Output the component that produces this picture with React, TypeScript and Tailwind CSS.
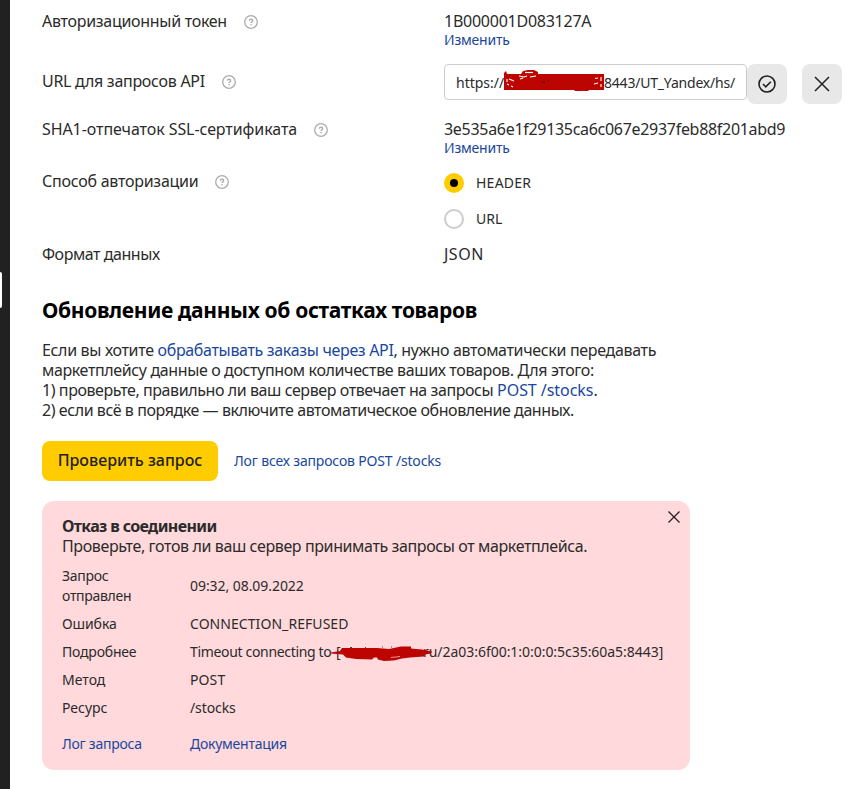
import React from 'react';

interface SettingRowProps {
  label: string;
  labelClass: string;
  className: string;
  hint?: boolean;
  children: React.ReactNode;
}

const DETAILS = [
  { label: 'Ошибка', value: 'CONNECTION_REFUSED', labelClass: 'tracking-[-0.08px]', valueClass: 'tracking-[0.06px]' },
  { label: 'Подробнее', value: '', labelClass: 'tracking-[-0.2px]', valueClass: '' },
  { label: 'Метод', value: 'POST', labelClass: '', valueClass: 'tracking-[0.1px]' },
  { label: 'Ресурс', value: '/stocks', labelClass: '', valueClass: 'tracking-[-0.1px]' }
];

const HintIcon = () => (
  <svg className="mt-0.5" width="14" height="14" viewBox="0 0 14 14" fill="none" stroke="#acacac">
    <circle cx="7" cy="7" r="6.3" strokeWidth="1.3" />
    <path d="M5.3 5.8c.1-2.1 3.4-2 3.4 0 0 1.1-1.7 1.1-1.7 2.2" strokeWidth="1.3" />
    <path d="M7 8.9v1.4" strokeWidth="1.4" />
  </svg>
);

const SettingRow: React.FC<SettingRowProps> = ({ label, labelClass, className, hint, children }) => (
  <div className={`flex items-start ${className}`}>
    <div className="flex h-5 w-[402px] shrink-0 items-center gap-[17px] leading-5">
      <span className={`whitespace-nowrap ${labelClass}`}>{label}</span>
      {hint && <HintIcon />}
    </div>
    {children}
  </div>
);

const UrlScribble = () => (
  <svg className="absolute left-[58px] top-[4px]" width="102" height="24" viewBox="0 0 102 24">
    <path d="M1 4l2-2 1 3h14l2-3 5-1h6l4 2v2h66v16H86l-1 1H72l-1-1H1z" fill="#bc0500" />
    <path d="M22 3.5h8" stroke="#fff" strokeWidth="1.2" />
    <path d="M16 7l5 1 3-1m3 1l6-1M4 10v3m2-3l5 2m-7 3l2 1m11-6l3-1M8 17l2 1M92 9.500l3-.500m3-1v4m-3 2l-4 1m7 0v3" stroke="#fff" strokeWidth="1.1" fill="none" />
    <path d="M39 13h3m3-1h1" stroke="#5c1512" strokeWidth="1.5" />
  </svg>
);

const HostScribble = () => (
  <svg className="absolute left-[140px] top-[1px]" width="104" height="20" viewBox="0 0 104 20">
    <path d="M20 4.500h2M35 4.500h1M52 4h1M61 4h1" stroke="#5c3a3c" />
    <path d="M1 9.500l9-1.500 2-3h35l12 1 12-2.500h10v2l11 1 10 2-1 2-6 1-1 2-14 1-8 1-8 2-10 .500-6-1.500-1-2-3 0-2 2-16-.500-10-1.500-3-3-12-1z" fill="#bc0500" />
    <path d="M61 14.500l9-1" stroke="#f4b9bb" strokeWidth=".8" />
  </svg>
);

const App = () => (
  <div className="flex h-[789px] w-[863px] overflow-hidden bg-white font-['Noto_Sans',sans-serif] text-[16px] text-[#2b2b2b]">
    <div className="w-[10px] shrink-0 bg-[#212121] pt-[272px]">
      <div className="h-[36px] w-[2px] rounded-r-[2px] bg-white" />
    </div>

    <main className="flex-1 pl-8 pt-[11px]">
      <SettingRow label="Авторизационный токен" labelClass="tracking-[-0.29px]" className="h-[53px]" hint>
        <div className="flex flex-col">
          <span className="leading-5 tracking-[-0.25px]">1B000001D083127A</span>
          <a className="text-[14px] leading-[18px] tracking-[-0.2px] text-[#1a479c]">Изменить</a>
        </div>
      </SettingRow>

      <SettingRow label="URL для запросов API" labelClass="tracking-[-0.28px]" className="h-[55px] [&>div:first-child]:mt-[7px]" hint>
        <div className="relative flex h-9 w-[303px] items-center rounded-[4px] border border-[#ccc] pl-[11px] text-[14px]">
          <span className="w-[148px]">https://</span>
          <span className="whitespace-nowrap tracking-[-0.2px]">8443/UT_Yandex/hs/</span>
          <UrlScribble />
        </div>
        <button className="flex size-10 items-center justify-center rounded-[8px] bg-[#e8e8e8]">
          <svg width="18" height="18" viewBox="0 0 18 18" fill="none" stroke="#212121" strokeWidth="1.6">
            <circle cx="9" cy="9" r="8" />
            <path d="M5 9l2.8 2.8 5-5" />
          </svg>
        </button>
        <button className="ml-[15px] flex size-10 items-center justify-center rounded-[8px] bg-[#e8e8e8]">
          <svg width="16" height="16" viewBox="0 0 16 16" fill="none" stroke="#212121" strokeWidth="1.5">
            <path d="M1 1l14 14M15 1L1 15" />
          </svg>
        </button>
      </SettingRow>

      <SettingRow label="SHA1-отпечаток SSL-сертификата" labelClass="tracking-[-0.08px]" className="h-[54px]" hint>
        <div className="flex flex-col">
          <span className="leading-5 tracking-[-0.3px]">3e535a6e1f29135ca6c067e2937feb88f201abd9</span>
          <a className="text-[14px] leading-[18px] tracking-[-0.2px] text-[#1a479c]">Изменить</a>
        </div>
      </SettingRow>

      <SettingRow label="Способ авторизации" labelClass="tracking-[-0.25px]" className="h-[71px] [&>div:first-child]:-mt-[2px]" hint>
        <div className="flex flex-col gap-4 text-[14px] leading-5">
          <label className="flex items-center gap-3">
            <span className="flex size-5 items-center justify-center rounded-full bg-[#fc0]">
              <span className="size-2 rounded-full bg-black" />
            </span>
            <span className="tracking-[0.25px]">HEADER</span>
          </label>
          <label className="flex items-center gap-3">
            <span className="size-5 rounded-full border-2 border-[#ccc]" />
            <span>URL</span>
          </label>
        </div>
      </SettingRow>

      <SettingRow label="Формат данных" labelClass="tracking-[-0.45px]" className="h-[52px]">
        <span className="leading-5 tracking-[0.5px]">JSON</span>
      </SettingRow>

      <h2 className="h-[44px] whitespace-nowrap text-[21px] font-bold leading-7 tracking-[-0.34px] text-black">
        Обновление данных об остатках товаров
      </h2>

      <div className="whitespace-nowrap leading-5">
        <p className="tracking-[-0.33px]">
          Если вы хотите <a className="text-[#1a479c]">обрабатывать заказы через API</a>, нужно автоматически передавать
        </p>
        <p className="tracking-[-0.37px]">маркетплейсу данные о доступном количестве ваших товаров. Для этого:</p>
        <p className="tracking-[-0.42px]">
          1) проверьте, правильно ли ваш сервер отвечает на запросы{' '}
          <a className="tracking-[-0.05px] text-[#1a479c]">POST /stocks</a>.
        </p>
        <p className="tracking-[-0.43px]">2) если всё в порядке — включите автоматическое обновление данных.</p>
      </div>

      <div className="mt-[21px] flex items-center gap-4 whitespace-nowrap">
        <button className="flex h-10 w-[176px] items-center justify-center rounded-[8px] bg-[#fc0] pb-0.5 font-medium text-[#212121]">
          Проверить запрос
        </button>
        <a className="pb-0.5 text-[14px] tracking-[-0.17px] text-[#1a479c]">Лог всех запросов POST /stocks</a>
      </div>

      <section className="relative mt-5 h-[269px] w-[648px] whitespace-nowrap rounded-[12px] bg-[#ffd9dc] px-5 pt-[15px]">
        <svg className="absolute right-[10px] top-[10px]" width="12" height="12" viewBox="0 0 12 12" stroke="#212121" strokeWidth="1.3">
          <path d="M.5 .5l11 11M11.5 .5l-11 11" />
        </svg>
        <h3 className="font-bold leading-5 tracking-[-0.63px]">Отказ в соединении</h3>
        <p className="leading-5 tracking-[-0.385px]">Проверьте, готов ли ваш сервер принимать запросы от маркетплейса.</p>

        <div className="mt-[10px] flex flex-col gap-2 text-[14px] leading-5">
          <div className="flex items-center">
            <span className="w-32 tracking-[-0.3px]">
              Запрос
              <br />
              отправлен
            </span>
            <span className="tracking-[-0.06px]">09:32, 08.09.2022</span>
          </div>
          {DETAILS.map(item => (
            <div key={item.label} className="flex">
              <span className="w-32">
                <span className={item.labelClass}>{item.label}</span>
              </span>
              {item.value ? (
                <span className={item.valueClass}>{item.value}</span>
              ) : (
                <span className="relative flex">
                  <span className="w-[146px] tracking-[-0.33px]">Timeout connecting to</span>
                  <span className="w-[87px]">[</span>
                  <span className="tracking-[-0.04px]">ru/2a03:6f00:1:0:0:0:5c35:60a5:8443]</span>
                  <HostScribble />
                </span>
              )}
            </div>
          ))}
        </div>

        <div className="mt-4 flex text-[14px] leading-5 tracking-[-0.25px] text-[#1a479c]">
          <a className="w-32">Лог запроса</a>
          <a>Документация</a>
        </div>
      </section>
    </main>
  </div>
);

export default App;
